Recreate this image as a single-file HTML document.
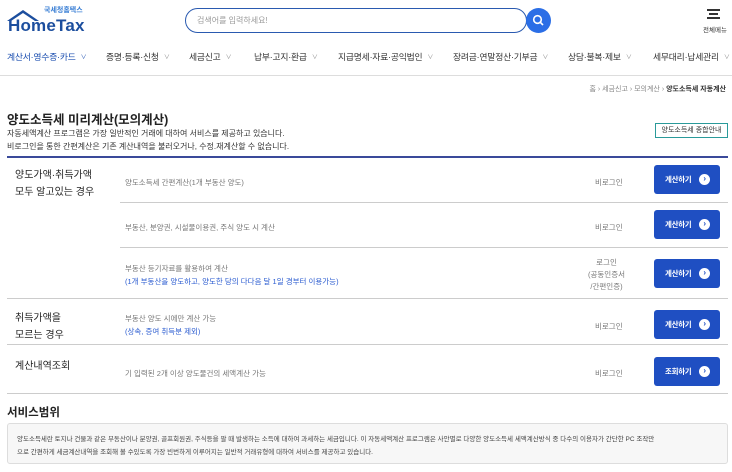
<!DOCTYPE html><html><head><meta charset="utf-8"><style>
*{margin:0;padding:0;box-sizing:border-box}
body{width:732px;height:472px;overflow:hidden;background:#fff;font-family:"Liberation Sans","Noto Sans CJK KR",sans-serif;color:#222;position:relative}
.a{position:absolute;white-space:nowrap}
.nav{font-size:8.8px;color:#333;top:50px;letter-spacing:-0.2px}
.nav i{font-style:normal;font-size:6px;color:#888;margin-left:5px;vertical-align:1px}
.btn{position:absolute;left:654px;width:66px;height:29px;background:#1f4fc2;border-radius:3px;color:#fff;font-size:7.5px;font-weight:bold;padding-left:11px;line-height:29px;letter-spacing:-0.3px}
.btn b{position:absolute;right:10px;top:9px;width:11px;height:11px;border-radius:50%;background:#fff;color:#1f4fc2;font-size:8px;line-height:10px;text-align:center}
.g{font-size:7.5px;color:#777}
.hl{position:absolute;height:1px;background:#ccc}
.lab{font-size:10px;color:#222;line-height:17px}
</style></head><body>
<svg class="a" style="left:6px;top:8px" width="34" height="14" viewBox="0 0 34 14"><path d="M1 13 L17 2 L33 13 L29 13 L17 5 L5 13Z" fill="#1c4e9e"/></svg>
<div class="a" style="left:44px;top:5px;font-size:7px;color:#3a7fd5;font-weight:bold">국세청홈택스</div>
<div class="a" style="left:8px;top:16px;font-size:17px;font-weight:bold;color:#1c4e9e;letter-spacing:0.2px">HomeTax</div>
<div class="a" style="left:185px;top:8px;width:342px;height:25px;border:1.5px solid #2a5ab0;border-radius:13px"></div>
<div class="a" style="left:197px;top:15px;font-size:8px;color:#999">검색어를 입력하세요!</div>
<div class="a" style="left:526px;top:8px;width:25px;height:25px;border-radius:50%;background:#2b6ee6"></div>
<svg class="a" style="left:532px;top:14px" width="13" height="13" viewBox="0 0 13 13"><circle cx="5.5" cy="5.5" r="3.8" fill="none" stroke="#fff" stroke-width="1.6"/><path d="M8.3 8.3 L11 11" stroke="#fff" stroke-width="1.6"/></svg>
<div class="a" style="left:707px;top:9px;width:13px;height:1.5px;background:#333"></div>
<div class="a" style="left:709px;top:13px;width:9px;height:1.5px;background:#333"></div>
<div class="a" style="left:707px;top:17px;width:13px;height:1.5px;background:#333"></div>
<div class="a" style="left:703px;top:24px;font-size:6.5px;color:#333">전체메뉴</div>
<div class="a nav" style="left:7px;color:#1c4fb0">계산서·영수증·카드<i style="color:#1c4fb0">∨</i></div>
<div class="a nav" style="left:106px">증명·등록·신청<i>∨</i></div>
<div class="a nav" style="left:189px">세금신고<i>∨</i></div>
<div class="a nav" style="left:254px">납부·고지·환급<i>∨</i></div>
<div class="a nav" style="left:338px">지급명세·자료·공익법인<i>∨</i></div>
<div class="a nav" style="left:453px">장려금·연말정산·기부금<i>∨</i></div>
<div class="a nav" style="left:568px">상담·불복·제보<i>∨</i></div>
<div class="a nav" style="left:653px">세무대리·납세관리<i>∨</i></div>
<div class="hl" style="left:0;top:75px;width:732px;background:#ddd"></div>
<div class="a" style="right:6px;top:84px;font-size:7px;color:#888">홈 › 세금신고 › 모의계산 › <b style="color:#333">양도소득세 자동계산</b></div>
<div class="a" style="left:7px;top:109px;font-size:12.5px;font-weight:bold">양도소득세 미리계산(모의계산)</div>
<div class="a" style="left:7px;top:128px;font-size:8px;color:#333">자동세액계산 프로그램은 가장 일반적인 거래에 대하여 서비스를 제공하고 있습니다.</div>
<div class="a" style="left:7px;top:141px;font-size:8px;color:#333">비로그인을 통한 간편계산은 기존 계산내역을 불러오거나, 수정.재계산할 수 없습니다.</div>
<div class="a" style="left:655px;top:123px;width:73px;height:15px;border:1px solid #2a9a9a;font-size:7px;color:#333;text-align:center;line-height:13px">양도소득세 종합안내</div>
<div class="hl" style="left:7px;top:156px;width:721px;height:1.5px;background:#3a4a9a"></div>
<div class="a lab" style="left:15px;top:167px">양도가액·취득가액<br>모두 알고있는 경우</div>
<div class="a g" style="left:125px;top:177px">양도소득세 간편계산(1개 부동산 양도)</div>
<div class="a g" style="left:595px;top:177px">비로그인</div>
<div class="btn" style="top:165px">계산하기<b>›</b></div>
<div class="hl" style="left:120px;top:202px;width:608px"></div>
<div class="a g" style="left:125px;top:222px">부동산, 분양권, 시설물이용권, 주식 양도 시 계산</div>
<div class="a g" style="left:595px;top:222px">비로그인</div>
<div class="btn" style="top:210px">계산하기<b>›</b></div>
<div class="hl" style="left:120px;top:247px;width:608px"></div>
<div class="a g" style="left:125px;top:263px">부동산 등기자료를 활용하여 계산</div>
<div class="a g" style="left:125px;top:276px;color:#2a5bd0">(1개 부동산을 양도하고, 양도한 당의 다다음 달 1일 경부터 이용가능)</div>
<div class="a g" style="left:588px;top:257px;text-align:center;line-height:12px">로그인<br>(공동인증서<br>/간편인증)</div>
<div class="btn" style="top:259px">계산하기<b>›</b></div>
<div class="hl" style="left:7px;top:298px;width:721px"></div>
<div class="a lab" style="left:15px;top:310px">취득가액을<br>모르는 경우</div>
<div class="a g" style="left:125px;top:313px">부동산 양도 시에만 계산 가능</div>
<div class="a g" style="left:125px;top:326px;color:#2a5bd0">(상속, 증여 취득분 제외)</div>
<div class="a g" style="left:595px;top:321px">비로그인</div>
<div class="btn" style="top:310px">계산하기<b>›</b></div>
<div class="hl" style="left:7px;top:344px;width:721px"></div>
<div class="a lab" style="left:15px;top:358px">계산내역조회</div>
<div class="a g" style="left:125px;top:368px">기 입력된 2개 이상 양도물건의 세액계산 가능</div>
<div class="a g" style="left:595px;top:368px">비로그인</div>
<div class="btn" style="top:357px">조회하기<b>›</b></div>
<div class="hl" style="left:7px;top:393px;width:721px"></div>
<div class="a" style="left:7px;top:404px;font-size:11.5px;font-weight:bold">서비스범위</div>
<div class="a" style="left:7px;top:423px;width:721px;height:41px;background:#f7f7f7;border:1px solid #ddd;border-radius:3px"></div>
<div class="a" style="left:17px;top:433px;font-size:6.5px;color:#444">양도소득세란 토지나 건물과 같은 부동산이나 분양권, 골프회원권, 주식등을 팔 때 발생하는 소득에 대하여 과세하는 세금입니다. 이 자동세액계산 프로그램은 사안별로 다양한 양도소득세 세액계산방식 중 다수의 이용자가 간단한 PC 조작만</div>
<div class="a" style="left:17px;top:446px;font-size:6.5px;color:#444">으로 간편하게 세금계산내역을 조회해 볼 수있도록 가장 빈번하게 이루어지는 일반적 거래유형에 대하여 서비스를 제공하고 있습니다.</div>
</body></html>
